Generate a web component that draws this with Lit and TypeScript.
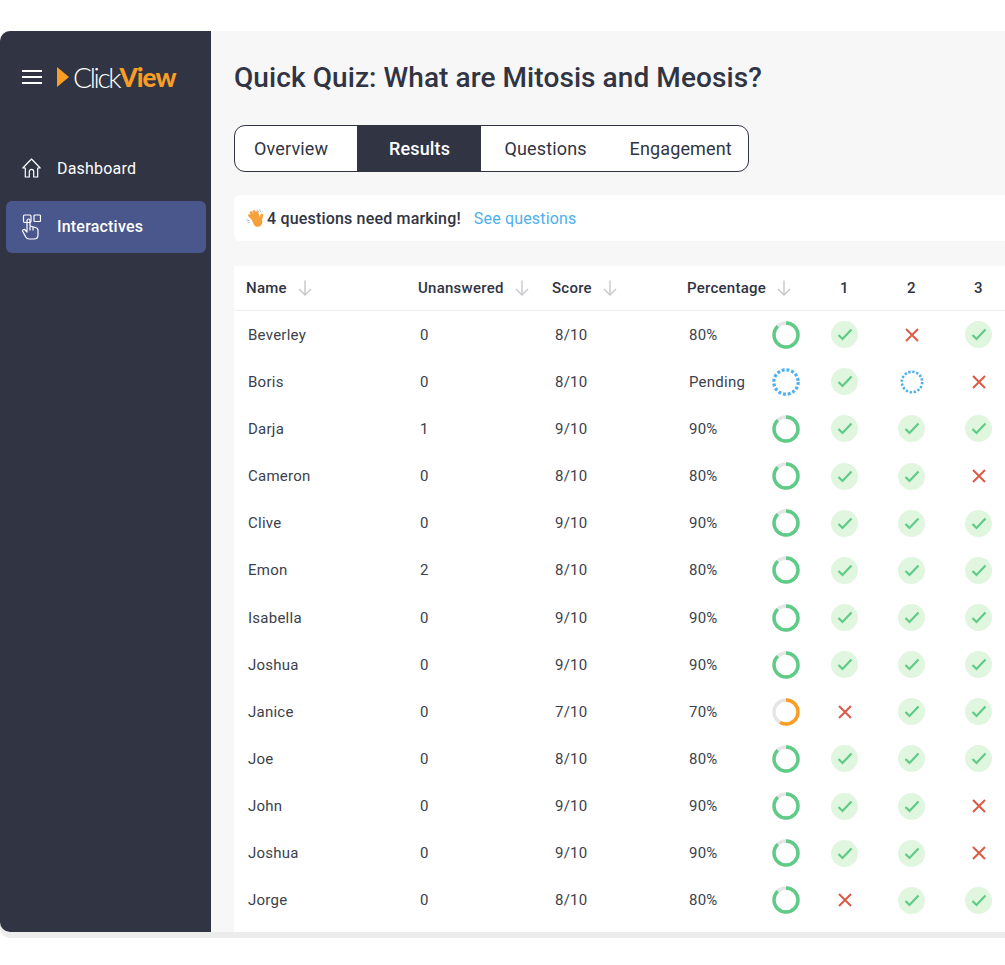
import { LitElement, html, css, svg } from 'lit';
import { customElement } from 'lit/decorators.js';

type Mark = 'c' | 'x' | 'p';

interface Row {
  name: string;
  unanswered: number;
  score: string;
  pct: string;
  ring: number;
  marks: Mark[];
}

const GREEN = '#5ecb87';
const ORANGE = '#fa9d24';

const rows: Row[] = [
  { name: 'Beverley', unanswered: 0, score: '8/10', pct: '80%', ring: 0.875, marks: ['c', 'x', 'c'] },
  { name: 'Boris', unanswered: 0, score: '8/10', pct: 'Pending', ring: -1, marks: ['c', 'p', 'x'] },
  { name: 'Darja', unanswered: 1, score: '9/10', pct: '90%', ring: 0.875, marks: ['c', 'c', 'c'] },
  { name: 'Cameron', unanswered: 0, score: '8/10', pct: '80%', ring: 0.875, marks: ['c', 'c', 'x'] },
  { name: 'Clive', unanswered: 0, score: '9/10', pct: '90%', ring: 0.875, marks: ['c', 'c', 'c'] },
  { name: 'Emon', unanswered: 2, score: '8/10', pct: '80%', ring: 0.875, marks: ['c', 'c', 'c'] },
  { name: 'Isabella', unanswered: 0, score: '9/10', pct: '90%', ring: 0.875, marks: ['c', 'c', 'c'] },
  { name: 'Joshua', unanswered: 0, score: '9/10', pct: '90%', ring: 0.875, marks: ['c', 'c', 'c'] },
  { name: 'Janice', unanswered: 0, score: '7/10', pct: '70%', ring: 0.58, marks: ['x', 'c', 'c'] },
  { name: 'Joe', unanswered: 0, score: '8/10', pct: '80%', ring: 0.875, marks: ['c', 'c', 'c'] },
  { name: 'John', unanswered: 0, score: '9/10', pct: '90%', ring: 0.875, marks: ['c', 'c', 'x'] },
  { name: 'Joshua', unanswered: 0, score: '9/10', pct: '90%', ring: 0.875, marks: ['c', 'c', 'x'] },
  { name: 'Jorge', unanswered: 0, score: '8/10', pct: '80%', ring: 0.875, marks: ['x', 'c', 'c'] },
];

const arrow = html`<svg class="sort" width="14" height="16" viewBox="0 0 14 16" fill="none" stroke="#c9cacd" stroke-width="1.5">
  <path d="M7 0.5V15M1 9l6 6 6-6" />
</svg>`;

function ring(fraction: number) {
  const r = 12;
  const len = 2 * Math.PI * r;
  if (fraction < 0) {
    return html`<svg class="ring" width="28" height="28" viewBox="0 0 28 28" fill="none">
      <circle cx="14" cy="14" r="12.2" stroke="#4dafee" stroke-width="3.2" stroke-dasharray="2.9 1.9" />
    </svg>`;
  }
  const color = fraction < 0.7 ? ORANGE : GREEN;
  return html`<svg class="ring" width="28" height="28" viewBox="0 0 28 28" fill="none">
    <circle cx="14" cy="14" r="${r}" stroke="#e6e6e6" stroke-width="3.4" />
    <circle cx="14" cy="14" r="${r}" stroke="${color}" stroke-width="3.4"
      stroke-dasharray="${fraction * len} ${len}" transform="rotate(-90 14 14)" />
  </svg>`;
}

function mark(m: Mark) {
  if (m === 'c') {
    return html`<span class="check"><svg width="16" height="13" viewBox="0 0 16 13" fill="none" stroke="${GREEN}" stroke-width="2.2">
      <path d="M1.5 7l4 4L14.5 1.5" />
    </svg></span>`;
  }
  if (m === 'x') {
    return html`<svg width="16" height="16" viewBox="0 0 16 16" fill="none" stroke="#dc5b45" stroke-width="2">
      <path d="M2 2l12 12M14 2L2 14" />
    </svg>`;
  }
  return html`<svg width="24" height="24" viewBox="0 0 24 24" fill="none">
    <circle cx="12" cy="12" r="10.2" stroke="#4dafee" stroke-width="2.6" stroke-dasharray="2.3 1.7" />
  </svg>`;
}

const wave = svg`
  <g stroke="#f6a13a" stroke-width="2.7" stroke-linecap="round" fill="none">
    <path d="M9 11L4.500 6.500M10 9.500L6 3.500M12 9L9 2.500M14 9.500L11.800 3.500M15.500 12L16.800 6" />
  </g>
  <path d="M6.500 9.500L14 7.500l3.500 5c0 3-2.300 5.300-5 5.300-2.500 0-4-1.800-6-8.300z" fill="#f6a13a" />
  <path d="M1.500 10.500l3 1.500M2.500 13l2 .8M12 .6l2 2.800M14.500.5l1.200 2.500" fill="none" stroke="#a9abb0" stroke-width=".9" />
`;

@customElement('app-root')
export class AppRoot extends LitElement {
  static styles = css`
    :host {
      display: block;
      width: 1005px;
      height: 965px;
      overflow: hidden;
      background: #fff;
      font-family: Roboto, sans-serif;
      color: #303443;
    }

    .window {
      display: flex;
      margin-top: 31px;
      height: 901px;
      border-radius: 10px 0 0 10px;
      background: #f7f7f7;
      box-shadow: 0 6px 0 #ececec;
    }

    .side {
      flex: none;
      width: 211px;
      background: #303443;
      border-radius: 10px 0 0 10px;
      color: #fff;
    }

    .brand {
      display: flex;
      align-items: center;
      height: 91px;
      padding-left: 22px;
    }

    .burger {
      display: block;
      margin-right: 15px;
    }

    .logo {
      display: flex;
      align-items: center;
      font-family: Lato, sans-serif;
      line-height: 30px;
    }

    .logo svg {
      margin-right: 4px;
    }

    .logo .click {
      font-size: 28px;
      font-weight: 300;
      letter-spacing: -2.3px;
    }

    .logo .view {
      font-size: 26px;
      font-weight: 900;
      letter-spacing: -0.9px;
      color: #fa9d24;
    }

    nav {
      padding: 20px 5px 0 6px;
    }

    .item {
      display: flex;
      align-items: center;
      gap: 16px;
      height: 52px;
      padding-left: 16px;
      border-radius: 6px;
      font-size: 16px;
      margin-bottom: 7px;
      letter-spacing: 0.2px;
    }

    .item svg {
      flex: none;
    }

    .item.active {
      box-sizing: border-box;
      padding-bottom: 1px;
      background: #4a578c;
      font-weight: 500;
    }

    main {
      flex: 1;
      min-width: 0;
      display: flex;
      flex-direction: column;
      padding: 31px 0 0 23px;
      overflow: hidden;
    }

    h1 {
      margin: 0;
      font-size: 28px;
      font-weight: 500;
      letter-spacing: 0.08px;
      line-height: 32px;
      white-space: nowrap;
    }

    .tabs {
      display: flex;
      align-self: flex-start;
      margin-top: 31px;
      height: 47px;
      box-sizing: border-box;
      border: 1.5px solid #303443;
      border-radius: 11px;
      background: #fff;
      overflow: hidden;
      font-size: 18px;
      letter-spacing: 0.15px;
    }

    .tab {
      display: flex;
      align-items: center;
      box-sizing: border-box;
    }

    .tab.overview {
      width: 121.5px;
      padding-left: 19px;
    }

    .tab.results {
      width: 124px;
      padding-left: 32.5px;
      background: #303443;
      color: #fff;
      font-weight: 500;
    }

    .tab.questions {
      width: 126px;
      padding-left: 24px;
    }

    .tab.engagement {
      width: 141px;
      padding-left: 23px;
    }

    .banner {
      display: flex;
      align-items: center;
      margin-top: 23px;
      height: 46px;
      padding-left: 11px;
      background: #fff;
      border-radius: 6px 0 0 6px;
      font-size: 16px;
      font-weight: 500;
      letter-spacing: 0.18px;
    }

    .banner svg {
      margin-right: 3px;
    }

    .banner a {
      margin-left: 13px;
      font-weight: 400;
      color: #4dafee;
      letter-spacing: 0.17px;
    }

    .table {
      flex: 1;
      margin-top: 25px;
      background: #fff;
      font-size: 15px;
      letter-spacing: 0.25px;
      color: #3c3f4c;
    }

    .row {
      display: grid;
      grid-template-columns: 186px 135px 134px 65px 57px 67px 67px 67px;
      align-items: center;
      height: 47.17px;
    }

    .row.head {
      height: 44px;
      border-bottom: 1px solid #eeeeee;
      font-weight: 500;
      color: #303443;
    }

    .cell {
      display: flex;
      align-items: center;
      justify-content: center;
    }

    .text {
      justify-content: flex-start;
      white-space: nowrap;
    }

    .first {
      padding-left: 14px;
    }

    .head .text {
      gap: 11px;
      margin-left: -2px;
    }

    .head .score {
      margin-left: -3px;
    }

    .head .wide {
      grid-column: span 2;
    }

    .ring-cell {
      justify-content: flex-start;
      padding-left: 18px;
    }

    .check {
      display: flex;
      align-items: center;
      justify-content: center;
      width: 27px;
      height: 27px;
      border-radius: 50%;
      background: #e1f6df;
    }
  `;

  render() {
    return html`
      <div class="window">
        <aside class="side">
          <div class="brand">
            <svg class="burger" width="20" height="16" viewBox="0 0 20 16" stroke="#fff" stroke-width="2">
              <path d="M0 2h20M0 8h20M0 14h20" />
            </svg>
            <div class="logo">
              <svg width="12" height="20" viewBox="0 0 12 20"><path d="M0 0l12 10L0 20z" fill="${ORANGE}" /></svg>
              <span class="click">Click</span><span class="view">View</span>
            </div>
          </div>
          <nav>
            <div class="item">
              <svg width="19" height="20" viewBox="0 0 19 20" fill="none" stroke="#fff" stroke-width="1.2" stroke-linejoin="round">
                <path d="M.8 10L9.500 1l8.700 9h-2.500v9H11.700v-5.500c0-1.200-1-2.200-2.200-2.200s-2.200 1-2.200 2.200V19H3.300v-9z" />
              </svg>
              Dashboard
            </div>
            <div class="item active">
              <svg width="19" height="26" viewBox="0 0 19 26" fill="none" stroke="#fff" stroke-width="1.200" stroke-linejoin="round">
                <rect x="1.500" y="1" width="7.500" height="7.500" rx="1.200" />
                <rect x="12" y="1" width="6.500" height="6.500" rx="1" />
                <path d="M5 13V6.500c0-2 3-2 3 0V12l5.500 1.500c1.500.4 2.500 1.300 2.500 2.800V21c0 2.500-1.800 4-4 4H7c-1.500 0-2.500-.8-3.200-2L.8 17.500c-.7-1.500 1.200-2.800 2.400-1.500L5 18z" />
                <path d="M8 12.500v4M11 13v3.500" />
              </svg>
              Interactives
            </div>
          </nav>
        </aside>
        <main>
          <h1>Quick Quiz: What are Mitosis and Meosis?</h1>
          <div class="tabs">
            <div class="tab overview">Overview</div>
            <div class="tab results">Results</div>
            <div class="tab questions">Questions</div>
            <div class="tab engagement">Engagement</div>
          </div>
          <div class="banner">
            <svg width="19" height="19" viewBox="0 0 19 19">${wave}</svg>
            4 questions need marking!
            <a>See questions</a>
          </div>
          <div class="table">
            <div class="row head">
              <div class="cell text first">Name ${arrow}</div>
              <div class="cell text">Unanswered ${arrow}</div>
              <div class="cell text score">Score ${arrow}</div>
              <div class="cell text wide">Percentage ${arrow}</div>
              <div class="cell">1</div>
              <div class="cell">2</div>
              <div class="cell">3</div>
            </div>
            ${rows.map(
              (r) => html`
                <div class="row">
                  <div class="cell text first">${r.name}</div>
                  <div class="cell text">${r.unanswered}</div>
                  <div class="cell text">${r.score}</div>
                  <div class="cell text">${r.pct}</div>
                  <div class="cell ring-cell">${ring(r.ring)}</div>
                  ${r.marks.map((m) => html`<div class="cell">${mark(m)}</div>`)}
                </div>
              `
            )}
          </div>
        </main>
      </div>
    `;
  }
}
